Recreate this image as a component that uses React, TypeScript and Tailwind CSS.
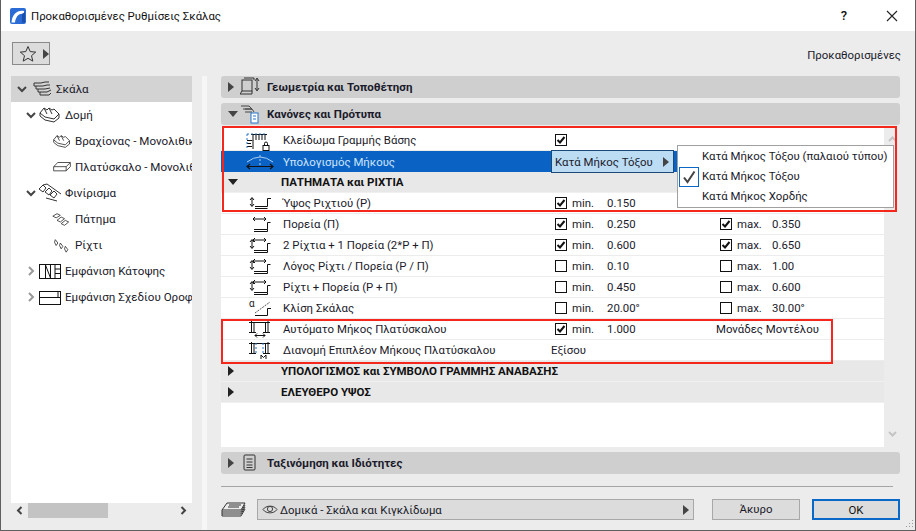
import React from 'react';

const font = 'font-["Roboto","Noto_Sans",sans-serif]';

function Check({ on }: { on: boolean }) {
  return (
    <span className="w-[12px] h-[12px] border border-[#111] bg-white flex items-center justify-center shrink-0">
      {on && (
        <svg width="10" height="10" viewBox="0 0 10 10">
          <path d="M1.5 5 L4 7.5 L8.5 2" fill="none" stroke="#111" strokeWidth="2" />
        </svg>
      )}
    </span>
  );
}

function Tri({ dir, color = '#444' }: { dir: 'right' | 'down'; color?: string }) {
  return dir === 'right' ? (
    <svg width="6" height="10" viewBox="0 0 6 10" className="shrink-0"><path d="M0 0 L6 5 L0 10 Z" fill={color} /></svg>
  ) : (
    <svg width="10" height="6" viewBox="0 0 10 6" className="shrink-0"><path d="M0 0 L10 0 L5 6 Z" fill={color} /></svg>
  );
}

function Chevron({ open }: { open: boolean }) {
  return open ? (
    <svg width="10" height="7" viewBox="0 0 10 7" className="shrink-0"><path d="M1 1 L5 5 L9 1" fill="none" stroke="#444" strokeWidth="2" /></svg>
  ) : (
    <svg width="7" height="10" viewBox="0 0 7 10" className="shrink-0"><path d="M1 1 L5 5 L1 9" fill="none" stroke="#999" strokeWidth="2" /></svg>
  );
}

// small line-art stair glyphs
const treeIcons: Record<string, React.ReactNode> = {
  stair: <g fill="none" stroke="#333"><path d="M5 4 H12 L16 3 H20 M5 7 H14 L18 6 H21 M7 10 H16 L21 9 M9 13 H18 L22 11 M11 16 H20 L22 14" /><path d="M5 4 V7 M7 7 V10 M9 10 V13 M11 13 V16" /></g>,
  struct: <g fill="none" stroke="#333"><path d="M2 8 L6 3 L9 5 L11 3 L14 5 L16 4 L21 9 V13 L16 17 L7 15 L2 11 Z" /><path d="M6 3 L9 9 M11 3 L14 9 M2 8 L7 12 L16 14 L21 9" /></g>,
  slab: <g fill="none" stroke="#333"><path d="M2 9 L7 4 H22 L17 9 Z M2 9 V14 H17 V9 M17 14 L22 9 V4" /></g>,
  finish: <g fill="none" stroke="#333"><path d="M1 6 L5 2 L8 5 L5 9 Z M7 9 L11 5 L14 8 L11 12 Z M12 12 L16 8 L19 11 L16 15 Z M5 2 L9 1 L23 11 M8 15 L19 18" /></g>,
  tread: <g fill="none" stroke="#333"><path d="M1 6 L6 3 L10 5 L5 8 Z M6 11 L11 7 L15 9 L10 13 Z M11 15 L16 11 L20 13 L15 17 Z" /></g>,
  riser: <g fill="none" stroke="#333"><path d="M4 3 L7 7 L5 10 L3 6 Z M10 7 L13 11 L11 14 L9 10 Z M16 11 L19 15 L17 18 L15 14 Z" /></g>,
  plan: <g fill="none" stroke="#111"><rect x="1.5" y="3.5" width="21" height="14" /><path d="M7.5 3.5 V17.5 M12.5 3.5 V17.5 M17 3.5 V17.5 M7.5 4 L12.5 17 M17 8 H22 M17 12.5 H22" /></g>,
  section: <g fill="none" stroke="#111"><rect x="1.5" y="4.5" width="21" height="13" /><path d="M1.5 10.5 H22.5 M20 4.5 V10" /></g>,
};

function TreeRow({ label, icon, indent, open, selected, leaf }: { label: string; icon: string; indent: number; open?: boolean; selected?: boolean; leaf?: boolean }) {
  return (
    <div className={`h-[26px] flex items-center ${selected ? 'bg-[#d3d3d3]' : ''}`} style={{ paddingLeft: indent }}>
      <span className="w-[12px] flex justify-center shrink-0">{open !== undefined && <Chevron open={open} />}</span>
      <svg width={leaf ? 20 : 24} height={leaf ? 17 : 20} viewBox="0 0 24 20" className="mx-[1px] shrink-0">{treeIcons[icon]}</svg>
      <span className="ml-[2px] pt-[2px] whitespace-nowrap text-[11.6px] text-[#1a1a2a]">{label}</span>
    </div>
  );
}

const stroke = { fill: 'none', stroke: '#111' };
const vArrow = <path d="M4 5 V13 M2 7 L4 4.5 L6 7 M2 11 L4 13.5 L6 11" {...stroke} />;
const hArrow = <path d="M5 5 H18 M7 3 L5 5 L7 7 M16 3 L18 5 L16 7" {...stroke} />;
const step = <path d="M6 15.5 H19.5 V8.5 H22.5 M6 17.5 H19.5 V15.5" {...stroke} />;

const rowIcons: Record<string, React.ReactNode> = {
  riser: <>{vArrow}<path d="M7 13.5 H19.5 V5.5 H23 M7 15.5 H19.5" {...stroke} /></>,
  going: <>{hArrow}{step}</>,
  both: <>{vArrow}{hArrow}{step}</>,
  slope: <><path d="M7 15 L22 4" fill="none" stroke="#555" strokeDasharray="2 1" /><path d="M7 17.5 H19.5 V10.5 H23" {...stroke} /><text x="1" y="9" fontSize="10" fill="#222">α</text></>,
  landing: <><path d="M1 3.5 H22 M3.5 2 V13 M6 3 V13 M17.5 3 V13 M20 2 V13 M1 13.5 H8 M15 13.5 H22" {...stroke} /><path d="M7 16.5 H17 M9 14.5 L7 16.5 L9 18.5 M15 14.5 L17 16.5 L15 18.5" {...stroke} /></>,
  landing2: <><path d="M1 3.5 H22 M3.5 2 V13 M6 3 V13 M17.5 3 V13 M20 2 V13 M1 13.5 H8 M15 13.5 H22" {...stroke} /><path d="M8 3 V14 M15 3 V14" stroke="#2277cc" strokeDasharray="2 2" /><path d="M13 19 V15 L15.5 17.5 L18 15 V19" {...stroke} /></>,
  lock: <><path d="M3 4.5 H19 M5 4.5 V11 M8 4.5 V10 M11 4.5 V10 M14 4.5 V10 M17 4.5 V10 M-1 10.5 H4 M-1 13.5 H3 M-1 16.5 H4 M5 10.5 V19" {...stroke} /><path d="M-1 4 V19 M-1 4 H19" fill="none" stroke="#2277cc" strokeDasharray="2 2" /><rect x="15" y="15.5" width="6" height="5" fill="none" stroke="#111" /><path d="M16.5 15.5 V13.5 A1.5 1.5 0 0 1 19.5 13.5 V15.5" {...stroke} /></>,
  arc: <><path d="M-1 11 Q12 1 25 11" fill="none" stroke="#a9cdf0" /><path d="M12 4 V15" stroke="#a9cdf0" strokeDasharray="2 2" /><path d="M-1 15.5 H25 M2 13 L-1 15.5 L2 18 M22 13 L25 15.5 L22 18" fill="none" stroke="#111" strokeWidth="1.2" /></>,
};

type Row = { icon: string; label: string; check?: boolean; min?: string; maxOn?: boolean; max?: string; extra?: string; plain?: string };

const rowsTop: Row[] = [
  { icon: 'riser', label: 'Ύψος Ριχτιού (Ρ)', check: true, min: '0.150' },
  { icon: 'going', label: 'Πορεία (Π)', check: true, min: '0.250', maxOn: true, max: '0.350' },
  { icon: 'both', label: '2 Ρίχτια + 1 Πορεία (2*Ρ + Π)', check: true, min: '0.600', maxOn: true, max: '0.650' },
  { icon: 'both', label: 'Λόγος Ρίχτι / Πορεία (Ρ / Π)', check: false, min: '0.10', maxOn: false, max: '1.00' },
  { icon: 'both', label: 'Ρίχτι + Πορεία (Ρ + Π)', check: false, min: '0.450', maxOn: false, max: '0.600' },
  { icon: 'slope', label: 'Κλίση Σκάλας', check: false, min: '20.00°', maxOn: false, max: '30.00°' },
  { icon: 'landing', label: 'Αυτόματο Μήκος Πλατύσκαλου', check: true, min: '1.000', extra: 'Μονάδες Μοντέλου' },
  { icon: 'landing2', label: 'Διανομή Επιπλέον Μήκους Πλατύσκαλου', plain: 'Εξίσου' },
];

function RowIcon({ name }: { name: string }) {
  return <svg width="34" height="21" viewBox="0 0 34 21" className="ml-[27px] w-[34px] shrink-0 overflow-visible">{rowIcons[name]}</svg>;
}

function ParamRow({ r }: { r: Row }) {
  return (
    <div className="h-[21px] flex items-center border-b border-[#ececec] bg-white text-[11.4px] text-[#1a1a2a]">
      <RowIcon name={r.icon} />
      <span className="ml-[1px] pt-[2px] w-[272px] whitespace-nowrap shrink-0">{r.label}</span>
      {r.plain ? (
        <span className="-ml-[4px] pt-[2px]">{r.plain}</span>
      ) : (
        <>
          <span className="w-[17px] shrink-0"><Check on={!!r.check} /></span>
          <span className="w-[35px] pt-[2px] shrink-0">min.</span>
          <span className="w-[113px] pt-[2px] shrink-0">{r.min}</span>
          {r.extra && <span className="-ml-[4px] pt-[2px] whitespace-nowrap">{r.extra}</span>}
          {r.max && (
            <>
              <span className="w-[17px] shrink-0"><Check on={!!r.maxOn} /></span>
              <span className="w-[35px] pt-[2px] shrink-0">max.</span>
              <span className="pt-[2px]">{r.max}</span>
            </>
          )}
        </>
      )}
    </div>
  );
}

function GroupRow({ label, open }: { label: string; open?: boolean }) {
  return (
    <div className="h-[21px] flex items-center bg-[#e8e8e8] border-b border-[#f0f0f0] text-[11.5px] font-bold text-[#111]">
      <span className="w-[60px] pl-[7px] flex shrink-0"><Tri dir={open ? 'down' : 'right'} color="#222" /></span>
      <span className="pt-[2px] whitespace-nowrap">{label}</span>
    </div>
  );
}

function Panel({ label, open, icon }: { label: string; open?: boolean; icon: React.ReactNode }) {
  return (
    <div className="h-[22px] rounded-[3px] bg-[#cfcfcf] flex items-center text-[11.5px] font-bold text-[#1a1a2a]">
      <span className="w-[19px] pl-[7px] shrink-0 flex"><Tri dir={open ? 'down' : 'right'} /></span>
      <svg width="20" height="20" viewBox="0 0 20 20" className="shrink-0">{icon}</svg>
      <span className="ml-[7px] pt-[2px] whitespace-nowrap">{label}</span>
    </div>
  );
}

function Logo() {
  return (
    <svg width="16" height="16" viewBox="0 0 16 16" className="shrink-0">
      <rect width="16" height="16" rx="2" fill="#2a6bd6" />
      <path d="M1.5 14.5 C2 6 8 1.5 14 3 V6 C10 4.5 5.5 8 5 14.5 Z" fill="#fff" />
      <path d="M12 6 V14.5 H15 V4 Z" fill="#1d4fa8" />
    </svg>
  );
}

export default function App() {
  return (
    <div className={`relative w-[916px] h-[531px] overflow-hidden bg-[#ececec] border-x border-b border-[#5f5f5f] flex flex-col ${font}`}>
      {/* title bar */}
      <div className="h-[31px] bg-white flex items-center shrink-0 pl-[9px]">
        <Logo />
        <span className="ml-[5px] pt-[2px] text-[11.4px] text-[#111]">Προκαθορισμένες Ρυθμίσεις Σκάλας</span>
        <span className="ml-auto mr-[39px] text-[13px] font-medium text-[#111]">?</span>
        <svg width="12" height="12" viewBox="0 0 12 12" className="mr-[17px]"><path d="M1 1 L11 11 M11 1 L1 11" stroke="#222" strokeWidth="1.1" /></svg>
      </div>

      {/* favorites row */}
      <div className="h-[45px] flex items-start shrink-0 relative">
        <button className="ml-[11px] mt-[11px] w-[38px] h-[23px] border border-[#8a8a8a] bg-[#dcdcdc] flex items-center pl-[6px] gap-[6px]">
          <svg width="18" height="18" viewBox="0 0 18 18"><path d="M9 1.5 L11.2 6.6 L16.7 7.1 L12.5 10.7 L13.8 16.1 L9 13.3 L4.2 16.1 L5.5 10.7 L1.3 7.1 L6.8 6.6 Z" fill="none" stroke="#333" strokeWidth="1" /></svg>
          <Tri dir="right" />
        </button>
        <span className="ml-auto mr-[14px] mt-[16px] text-[11.4px] text-[#1a1a2a]">Προκαθορισμένες</span>
      </div>

      <div className="flex-1 flex min-h-0">
        {/* left tree */}
        <div className="w-[191px] pl-[10px] shrink-0 flex flex-col pb-[12px]">
          <div className="flex-1 bg-white overflow-hidden">
            <TreeRow label="Σκάλα" icon="stair" indent={5} open selected />
            <TreeRow label="Δομή" icon="struct" indent={14} open />
            <TreeRow label="Βραχίονας - Μονολιθικό" icon="struct" indent={28} leaf />
            <TreeRow label="Πλατύσκαλο - Μονολιθικό" icon="slab" indent={28} leaf />
            <TreeRow label="Φινίρισμα" icon="finish" indent={14} open />
            <TreeRow label="Πάτημα" icon="tread" indent={28} leaf />
            <TreeRow label="Ρίχτι" icon="riser" indent={28} leaf />
            <TreeRow label="Εμφάνιση Κάτοψης" icon="plan" indent={14} open={false} />
            <TreeRow label="Εμφάνιση Σχεδίου Οροφής" icon="section" indent={14} open={false} />
          </div>
          <div className="h-[15px] flex items-center shrink-0">
            <span className="w-[17px] flex justify-center"><svg width="7" height="9" viewBox="0 0 7 9"><path d="M5.5 1 L2 4.5 L5.5 8" fill="none" stroke="#444" strokeWidth="2" /></svg></span>
            <span className="w-[80px] h-[15px] bg-[#c3c3c3]" />
            <span className="flex-1 flex justify-end pr-[5px]"><svg width="7" height="9" viewBox="0 0 7 9"><path d="M1.5 1 L5 4.5 L1.5 8" fill="none" stroke="#444" strokeWidth="2" /></svg></span>
          </div>
        </div>

        {/* splitter */}
        <div className="w-[5px] ml-[10px] bg-[#f6f6f6] shrink-0" />

        {/* right */}
        <div className="ml-[14px] w-[679px] flex flex-col shrink-0">
          <Panel label="Γεωμετρία και Τοποθέτηση" icon={<g fill="none" stroke="#333"><rect x="2" y="3" width="10" height="11" /><path d="M4 1 H14 V3 M2 14 L0 17 H12 L12 14 M17 2 V13 M15 4 L17 1 L19 4 M15 11 L17 14 L19 11" /></g>} />
          <div className="h-[5px] shrink-0" />
          <Panel label="Κανόνες και Πρότυπα" open icon={<g fill="none" stroke="#444"><path d="M1 2 H9 L12 5 H5 M3 5 H12 L14 8 M5 8 H12" /><rect x="11" y="9" width="7" height="10" fill="#fff" stroke="#2277cc" /><path d="M13 12 H16 M13 15 H16" stroke="#2277cc" /></g>} />

          <div className="flex mt-[1px] h-[321px]">
            <div className="w-[663px] bg-white pt-[4px] shrink-0">
              <div className="h-[21px] flex items-center border-b border-[#ececec] text-[11.4px] text-[#1a1a2a]">
                <RowIcon name="lock" />
                <span className="ml-[1px] pt-[2px] w-[272px] shrink-0">Κλείδωμα Γραμμής Βάσης</span>
                <Check on />
              </div>
              <div className="h-[21px] flex items-center bg-[#0a63c4] text-[11.4px] text-[#cfe4fa]">
                <RowIcon name="arc" />
                <span className="ml-[1px] pt-[2px] w-[268px] shrink-0">Υπολογισμός Μήκους</span>
                <span className="w-[123px] h-[23px] -my-[1px] bg-[#bcdcf4] border border-[#1a4a78] flex items-center pl-[3px] text-[#1a1a2a] shrink-0">
                  <span className="pt-[2px]">Κατά Μήκος Τόξου</span>
                  <span className="ml-auto mr-[4px] flex"><Tri dir="right" /></span>
                </span>
              </div>
              <GroupRow label="ΠΑΤΗΜΑΤΑ και ΡΙΧΤΙΑ" open />
              {rowsTop.map((r) => <ParamRow key={r.label} r={r} />)}
              <GroupRow label="ΥΠΟΛΟΓΙΣΜΟΣ και ΣΥΜΒΟΛΟ ΓΡΑΜΜΗΣ ΑΝΑΒΑΣΗΣ" />
              <GroupRow label="ΕΛΕΥΘΕΡΟ ΥΨΟΣ" />
            </div>
            <div className="w-[16px] flex flex-col justify-between items-center py-[10px] shrink-0">
              <svg width="9" height="6" viewBox="0 0 9 6"><path d="M1 5 L4.5 1.5 L8 5" fill="none" stroke="#c4c4c4" strokeWidth="2" /></svg>
              <svg width="9" height="6" viewBox="0 0 9 6"><path d="M1 1 L4.5 4.5 L8 1" fill="none" stroke="#c4c4c4" strokeWidth="2" /></svg>
            </div>
          </div>

          <div className="mt-[5px]">
            <Panel label="Ταξινόμηση και Ιδιότητες" icon={<g fill="none" stroke="#333"><rect x="4" y="2" width="11" height="15" rx="1" /><path d="M6.5 6 H12.5 M6.5 9 H12.5 M6.5 12 H12.5 M6.5 14.5 H12.5" /></g>} />
          </div>
          <div className="mt-[12px] border-t border-[#a5a5a5] w-[672px]" />
          <div className="mt-[12px] flex items-center w-[679px]">
            <svg width="26" height="18" viewBox="0 0 26 18" className="shrink-0"><path d="M6 2 H24 L20 9 H1 Z M1 9 V11 H20 L24 4 M1 11 V13 H20 L24 6 M1 13 V15 H20 L24 8" fill="none" stroke="#333" /><path d="M8 4 H20 M7 6 H18" stroke="#333" /></svg>
            <div className="ml-[10px] w-[437px] h-[21px] bg-[#dcdcdc] border border-[#a8a8a8] flex items-center pl-[4px] text-[11.4px] text-[#1a1a2a] shrink-0">
              <svg width="16" height="11" viewBox="0 0 16 11" className="shrink-0"><path d="M1 5.5 C4 1 12 1 15 5.5 C12 10 4 10 1 5.5 Z" fill="none" stroke="#444" /><circle cx="8" cy="5" r="2.6" fill="none" stroke="#444" /></svg>
              <span className="ml-[2px] pt-[2px]">Δομικά - Σκάλα και Κιγκλίδωμα</span>
              <span className="ml-auto mr-[4px] flex"><Tri dir="right" /></span>
            </div>
            <button className="ml-[18px] w-[88px] h-[21px] pt-[1px] bg-[#dcdcdc] border border-[#a8a8a8] text-[11.4px] text-[#1a1a2a] shrink-0">Άκυρο</button>
            <button className="ml-[12px] w-[88px] h-[21px] pt-[1px] bg-[#dcdcdc] border-2 border-[#0a68c8] text-[11.4px] text-[#111] shrink-0">OK</button>
          </div>
        </div>
      </div>

      {/* dropdown menu */}
      <div className="absolute left-[676px] top-[145px] w-[217px] h-[63px] bg-white border border-[#a0a0a0] text-[11.4px] text-[#1a1a2a] pl-[24px] flex flex-col justify-center">
        <div className="h-[20px] pt-[1px] flex items-center whitespace-nowrap">Κατά Μήκος Τόξου (παλαιού τύπου)</div>
        <div className="h-[20px] pt-[1px] flex items-center whitespace-nowrap">Κατά Μήκος Τόξου</div>
        <div className="h-[20px] pt-[1px] flex items-center whitespace-nowrap">Κατά Μήκος Χορδής</div>
        <span className="absolute left-[1px] top-[21px] w-[20px] h-[20px] border border-[#0a68c8] flex items-center justify-center">
          <svg width="14" height="14" viewBox="0 0 14 14"><path d="M2 7.5 L5.5 12 L12.5 1.5" fill="none" stroke="#444" strokeWidth="2" /></svg>
        </span>
      </div>

      {/* annotation frames */}
      <div className="absolute left-[221px] top-[126px] w-[675px] h-[86px] border-2 border-[#f5261b] pointer-events-none" />
      <div className="absolute left-[220px] top-[319px] w-[612px] h-[45px] border-2 border-[#f5261b] pointer-events-none" />

      {/* resize grip */}
      <svg width="10" height="10" viewBox="0 0 10 10" className="absolute right-[1px] bottom-[1px]"><path d="M8 1 h1 v1 h-1 Z M5 4 h1 v1 h-1 Z M8 4 h1 v1 h-1 Z M2 7 h1 v1 h-1 Z M5 7 h1 v1 h-1 Z M8 7 h1 v1 h-1 Z" fill="#9a9a9a" /></svg>
    </div>
  );
}
